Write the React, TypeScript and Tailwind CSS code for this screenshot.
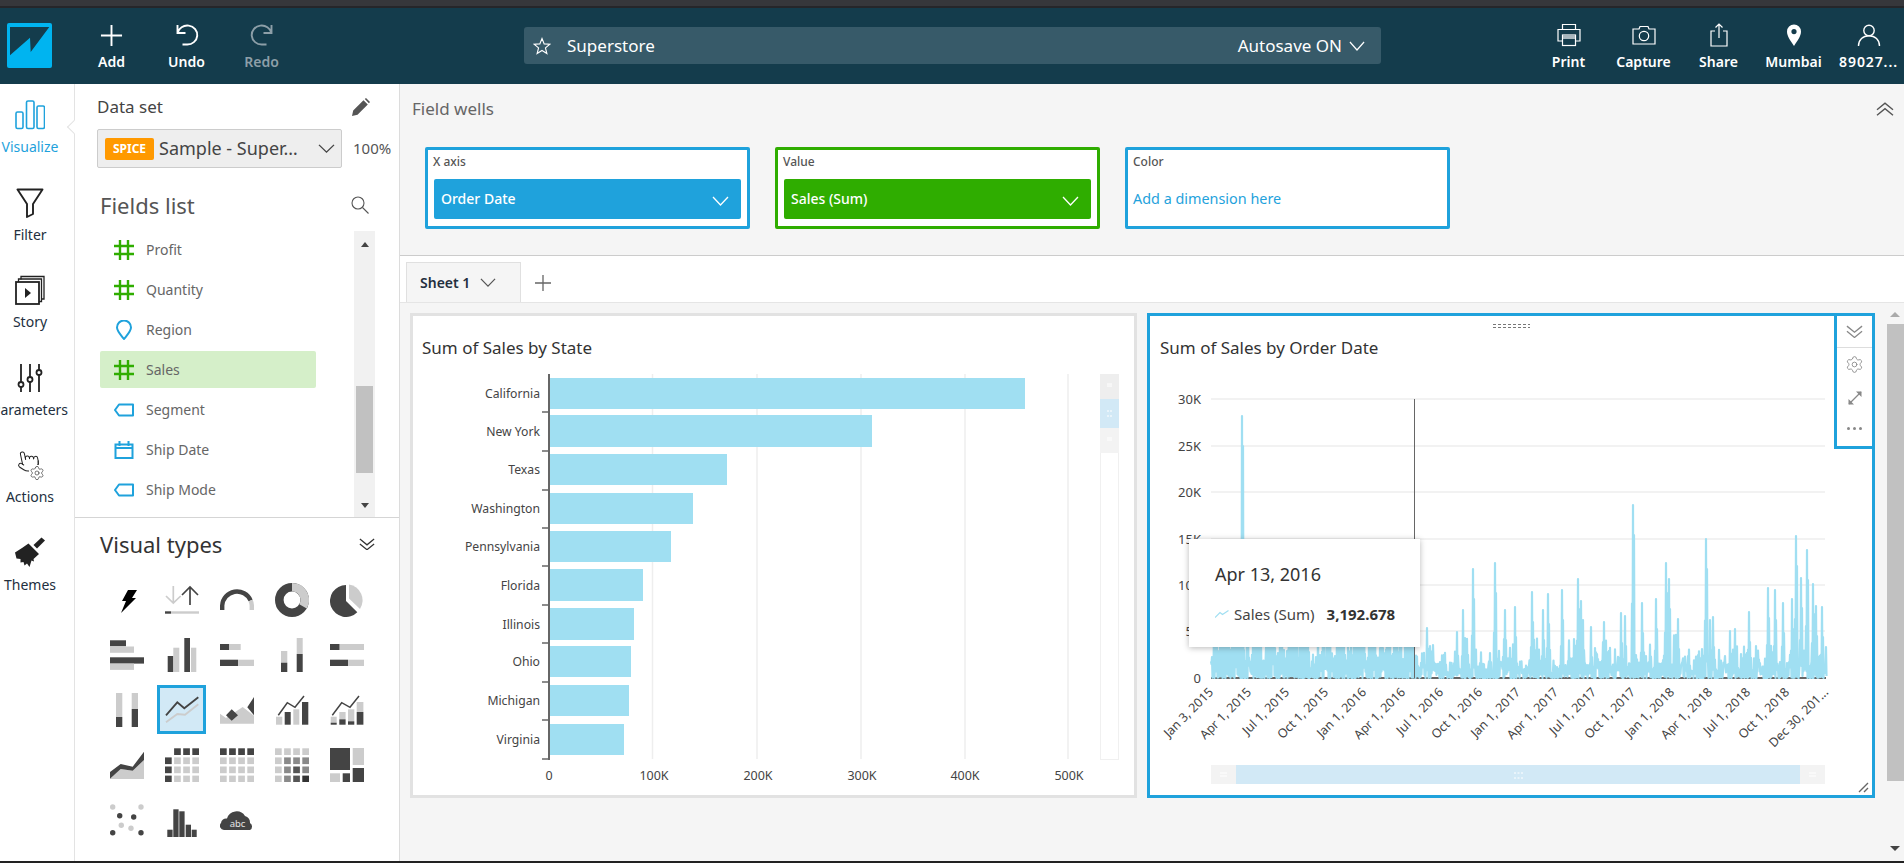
import React from "react";
import { Pointer, Settings } from "lucide-react";

const D = "#444444";
const L = "#cccccc";
const BLUE = "#1fa2dc";

const Wrap = ({ children }: { children: React.ReactNode }) => (
  <svg width="34" height="34" viewBox="0 0 34 34">{children}</svg>
);
const R = (x: number, y: number, w: number, h: number, f: string) => <rect x={x} y={y} width={w} height={h} fill={f} />;

const gridCells = (fn: (r: number, c: number) => string | null) => {
  const out: React.ReactNode[] = [];
  for (let r = 0; r < 4; r++)
    for (let c = 0; c < 4; c++) {
      const f = fn(r, c);
      if (f) out.push(<rect key={r + "-" + c} x={c * 9.1} y={r * 9.1 + 0.3} width="6.7" height="6.7" fill={f} />);
    }
  return out;
};

const heat = [
  [L, L, L, L],
  [L, "#8a8a8a", "#8a8a8a", "#8a8a8a"],
  [L, "#8a8a8a", "#555555", "#8a8a8a"],
  [L, "#8a8a8a", "#555555", "#333333"],
];

const visualIcons: React.ReactNode[] = [
  <Wrap><path d="M18 7L27 7L22 15L26 15L11 30L16 18L12 18Z" fill="#000" /></Wrap>,
  <Wrap>
    <g fill="none" strokeWidth="1.7">
      <path d="M8.3 3V20M1 13L8.3 20L15.7 13" stroke={L} />
      <path d="M25 22V4M17 12L25 4L33 12" stroke={D} />
    </g>
    {R(0, 28.3, 6, 2.4, D)}{R(6, 28.3, 28, 2.4, L)}
  </Wrap>,
  <Wrap>
    <path d="M2.2 27V22.5A14.8 14.8 0 0 1 30.6 17.5" fill="none" stroke={D} strokeWidth="4.4" />
    <path d="M30.6 17.5A14.8 14.8 0 0 1 31.8 22.5V27" fill="none" stroke={L} strokeWidth="4.4" />
  </Wrap>,
  <Wrap>
    <circle cx="17" cy="17" r="12.7" fill="none" stroke={D} strokeWidth="8.6" />
    <path d="M17 4.3A12.7 12.7 0 0 1 28 23.35" fill="none" stroke={L} strokeWidth="8.6" />
  </Wrap>,
  <Wrap>
    <path d="M16 18L16 2A16 16 0 1 0 27.3 29.3Z" fill={D} />
    <path d="M19 1.5A16 16 0 0 1 30 26L19 15.5Z" fill={L} />
  </Wrap>,
  <Wrap>{R(0, 2.3, 16, 6, D)}{R(0, 8.5, 24, 6.3, L)}{R(0, 19.3, 34, 6.3, D)}{R(0, 25.6, 24, 6.3, L)}</Wrap>,
  <Wrap>{R(2.7, 18, 5.7, 16, D)}{R(8.3, 9.7, 6, 24.3, L)}{R(19.3, 0, 5.7, 34, D)}{R(26, 9.7, 5.3, 24.3, L)}</Wrap>,
  <Wrap>{R(0, 6, 9.3, 6, D)}{R(9.3, 6, 11.4, 6, L)}{R(0, 21.7, 18, 6.3, D)}{R(18, 21.7, 16, 6.3, L)}</Wrap>,
  <Wrap>{R(6, 13, 6.3, 11.7, L)}{R(6, 24.7, 6.3, 9.3, D)}{R(21.7, 0, 6, 16, L)}{R(21.7, 16, 6, 18, D)}</Wrap>,
  <Wrap>{R(0, 6, 9.7, 6, D)}{R(9.7, 6, 24.3, 6, L)}{R(0, 21.7, 18, 6.3, D)}{R(18, 21.7, 16, 6.3, L)}</Wrap>,
  <Wrap>{R(6, 0, 6.3, 24, L)}{R(6, 24, 6.3, 10, D)}{R(21.7, 0, 6.3, 16, L)}{R(21.7, 16, 6.3, 18, D)}</Wrap>,
  <Wrap>
    <polyline points="1,29.3 12.3,21 20,21.7 33.3,11.3" fill="none" stroke={L} strokeWidth="1.8" />
    <polyline points="1,22.3 12.3,9.3 19.3,15.3 33.3,4.3" fill="none" stroke={D} strokeWidth="1.8" />
  </Wrap>,
  <Wrap>
    <path d="M0 20.7L6 25L22.7 14L34 22.7V30.7H0Z" fill={L} />
    <path d="M11.7 16.3L18 22.3L11.7 27.7L6 22.3ZM34 4V22.3L27.3 14.3Z" fill={D} />
  </Wrap>,
  <Wrap>
    {R(1, 23.7, 6.3, 8, L)}{R(9.7, 19, 6, 12.7, D)}{R(18.3, 16.3, 6, 15.4, L)}{R(27, 9, 6.3, 22.7, D)}
    <polyline points="3.3,22.3 12.3,9.7 20,14.3 29,3" fill="none" stroke={D} strokeWidth="1.5" />
  </Wrap>,
  <Wrap>
    {R(0.7, 23.7, 6, 6, L)}{R(0.7, 29.7, 6, 2, D)}{R(9.3, 19, 6.3, 7.3, L)}{R(9.3, 26.3, 6.3, 5.4, D)}
    {R(18, 16.3, 6.3, 12, L)}{R(18, 28.3, 6.3, 3.4, D)}{R(26.7, 9, 6.7, 10, L)}{R(26.7, 19, 6.7, 12.7, D)}
    <polyline points="2.3,22.3 11.7,9.7 20,14.3 29,3" fill="none" stroke={D} strokeWidth="1.5" />
  </Wrap>,
  <Wrap>
    <path d="M0 30.7L10.7 21L22.7 22.7L34 12V31H0Z" fill={L} />
    <path d="M0 24L10.7 16L22.7 18.7L34 3.7V12L22.7 22.7L10.7 21L0 30.7Z" fill={D} />
  </Wrap>,
  <Wrap>{gridCells((r, c) => (r === 0 ? (c === 0 ? null : D) : c === 0 ? D : L))}</Wrap>,
  <Wrap>{gridCells((r) => (r === 0 ? D : L))}</Wrap>,
  <Wrap>{gridCells((r, c) => heat[r][c])}</Wrap>,
  <Wrap>{R(0, 0, 20, 22, D)}{R(22.7, 0, 11.3, 17, L)}{R(22.7, 20, 11.3, 14, D)}{R(0, 25.3, 10, 8.7, L)}{R(12.7, 25.3, 7.3, 8.7, D)}</Wrap>,
  <Wrap>
    {[[2.7, 4], [31, 4], [11.3, 22.3], [21, 25.3]].map(([x, y]) => <circle key={x} cx={x} cy={y} r="2.7" fill={L} />)}
    {[[9.7, 12.7], [23.7, 14], [2.7, 29.7], [31, 29.7]].map(([x, y]) => <circle key={x + y} cx={x} cy={y} r="2.7" fill={D} />)}
  </Wrap>,
  <Wrap>{R(2.3, 26.7, 5.3, 7.3, D)}{R(8.3, 6.3, 5.3, 27.7, D)}{R(14.3, 8.3, 5.3, 25.7, D)}{R(20.7, 21.7, 5.3, 12.3, D)}{R(26.7, 26.7, 5, 7.3, D)}</Wrap>,
  <Wrap>
    <path d="M4 27A4.2 4.2 0 0 1 1 20A5 5 0 0 1 7 15.5A10 10 0 0 1 25 13A7 7 0 0 1 30 20A4 4 0 0 1 30 27Z" fill={D} />
    <text x="17.5" y="24" textAnchor="middle" fontSize="9.5" fill="#e5e5e5">abc</text>
  </Wrap>,
];

const Hash = () => (
  <svg width="20" height="20" viewBox="0 0 20 20" fill="none" stroke="#2fad00" strokeWidth="2.4">
    <path d="M6 0V20M14 0V20M0 6H20M0 14H20" />
  </svg>
);
const Tag = () => (
  <svg width="20" height="14" viewBox="0 0 20 14" fill="none" stroke={BLUE} strokeWidth="2">
    <path d="M1 7L5 1.5H19V12.5H5Z" strokeLinejoin="round" />
  </svg>
);
const PinOutline = () => (
  <svg width="18" height="20" viewBox="0 0 18 20" fill="none" stroke={BLUE} strokeWidth="2">
    <path d="M9 19C5 14 2 11 2 7.5A7 7 0 0 1 16 7.5C16 11 13 14 9 19Z" />
  </svg>
);
const Cal = () => (
  <svg width="20" height="20" viewBox="0 0 20 20" fill="none" stroke={BLUE} strokeWidth="2">
    <path d="M1.5 4.5H18.5V18H1.5ZM1.5 8H18.5" />
    <path d="M5.5 1V6M14.5 1V6" />
  </svg>
);

const fields: [string, React.ReactNode, boolean?][] = [
  ["Profit", <Hash />],
  ["Quantity", <Hash />],
  ["Region", <PinOutline />],
  ["Sales", <Hash />, true],
  ["Segment", <Tag />],
  ["Ship Date", <Cal />],
  ["Ship Mode", <Tag />],
];

const NavItem = ({ icon, label, dim, textCls }: { icon: React.ReactNode; label: string; dim?: boolean; textCls?: string }) => (
  <div className="flex h-full w-[75px] shrink-0 flex-col items-center pt-[14px]">
    <div className="flex h-[26px] items-center justify-center">{icon}</div>
    <div className={"mt-[4px] text-[14px] leading-[20px] font-semibold whitespace-nowrap " + (dim ? "text-[#8d9fa8] " : "text-white ") + (textCls ?? "")}>{label}</div>
  </div>
);

const RailItem = ({ icon, label, active }: { icon: React.ReactNode; label: string; active?: boolean }) => (
  <div className="flex h-[87.6px] w-[60px] flex-col items-center pt-[15px]">
    <div className="flex h-[32px] items-center justify-center">{icon}</div>
    <div className={"mt-[6px] text-[14px] leading-[20px] whitespace-nowrap " + (active ? "text-[#1fa2dc]" : "text-[#232f3e]")}>{label}</div>
  </div>
);

const Chevron = ({ color = "#fff", w = 17, h = 10, sw = 1.3 }: { color?: string; w?: number; h?: number; sw?: number }) => (
  <svg width={w} height={h} viewBox="0 0 17 10" fill="none" stroke={color} strokeWidth={sw} preserveAspectRatio="none">
    <path d="M1 1L8.5 9L16 1" />
  </svg>
);

const DoubleChevron = ({ up, size = 18, color = "#555" }: { up?: boolean; size?: number; color?: string }) => (
  <svg width={size} height={size * 0.8} viewBox="0 0 18 14" fill="none" stroke={color} strokeWidth="1.4">
    {up ? <path d="M1 7.5L9 1L17 7.5M1 13L9 6.5L17 13" /> : <path d="M1 1L9 7.5L17 1M1 6.5L9 13L17 6.5" />}
  </svg>
);

const Well = ({ label, color, value, pill }: { label: string; color: string; value: string; pill: string | null }) => (
  <div className="h-[82px] w-[325px] rounded-[2px] border-[3px] bg-white" style={{ borderColor: color }}>
    <div className="pl-[5px] pt-[4px] text-[12px] leading-[16px] font-medium text-[#555]">{label}</div>
    {pill ? (
      <div className="mx-[6px] mt-[9px] flex h-[40px] items-center justify-between rounded-[2px] pb-[1px] pl-[7px] pr-[12px]" style={{ backgroundColor: pill }}>
        <span className="text-[14px] font-medium text-white">{value}</span>
        <span className="mt-[5px]"><Chevron /></span>
      </div>
    ) : (
      <div className="mt-[9px] flex h-[40px] items-center pb-[1px] pl-[5px] text-[14.4px] text-[#1fa2dc]">{value}</div>
    )}
  </div>
);

const states: [string, number, number, number][] = [
  ["California", 378, 409, 1025],
  ["New York", 415, 447, 872],
  ["Texas", 454, 485, 727],
  ["Washington", 493, 524, 693],
  ["Pennsylvania", 531, 562, 671],
  ["Florida", 569, 601, 643],
  ["Illinois", 608, 640, 634],
  ["Ohio", 646, 677, 631],
  ["Michigan", 685, 716, 629],
  ["Virginia", 724, 755, 624],
];

const BarChart = () => (
  <svg width="721" height="435" viewBox="413 360 721 435" className="block">
    {[652.5, 757, 861, 965, 1068].map((x) => (
      <line key={x} x1={x} x2={x} y1="374" y2="759" stroke="#eeeeee" strokeWidth="1.5" />
    ))}
    {states.map(([n, a, b, r]) => (
      <g key={n}>
        <rect x="550" y={a} width={r - 550} height={b - a} fill="#a0dff2" />
        <text x="540" y={(a + b) / 2 + 4.5} textAnchor="end" fontSize="12.2" fill="#444">{n}</text>
      </g>
    ))}
    <line x1="549" x2="549" y1="374" y2="760" stroke="#666" strokeWidth="2" />
    {[412, 451, 490, 528, 566, 605, 643, 682, 720, 759].map((y) => (
      <line key={y} x1="542" x2="549" y1={y} y2={y} stroke="#666" strokeWidth="1.5" />
    ))}
    {[["0", 549], ["100K", 654], ["200K", 758], ["300K", 862], ["400K", 965], ["500K", 1069]].map(([t, x]) => (
      <text key={t} x={x} y="780" textAnchor="middle" fontSize="12.5" fill="#444">{t}</text>
    ))}
    <rect x="1100.5" y="374.5" width="18" height="385" fill="#fff" stroke="#f0f0f0" />
    <rect x="1100" y="374" width="19" height="25" fill="#eeeeee" />
    <rect x="1100" y="399" width="19" height="29" fill="#d2e9f6" />
    <rect x="1100" y="428" width="19" height="25" fill="#f3f3f3" />
    <path d="M1107 384H1112M1107 386H1112M1107 438H1112M1107 440H1112" stroke="#fff" />
    <path d="M1107 411H1109M1110 411H1112M1107 416H1109M1110 416H1112" stroke="#fff" />
  </svg>
);

const peaks: [number, number][] = [
  [1242, 416], [1473, 569], [1495, 563], [1463, 610], [1505, 610], [1515, 607], [1532, 592], [1427, 628], [1457, 632],
  [1633, 505], [1548, 594], [1543, 610], [1562, 590], [1578, 579], [1581, 601], [1583, 620], [1591, 627], [1604, 622],
  [1621, 613], [1625, 616], [1642, 603], [1656, 599], [1666, 563], [1669, 579], [1678, 619], [1706, 539], [1710, 620],
  [1713, 617], [1730, 631], [1735, 629], [1749, 612], [1768, 588], [1775, 590], [1783, 603], [1792, 599], [1796, 536],
  [1801, 578], [1807, 550], [1813, 584], [1816, 606], [1822, 607],
];

const buildSeries = () => {
  let seed = 12345;
  const rnd = () => {
    seed = (seed * 1103515 + 12345) % 2147483648;
    return seed / 2147483648;
  };
  const top: Record<number, number> = {};
  for (let x = 1211; x <= 1826; x++) {
    const env = 0.35 + 0.65 * Math.abs(Math.sin(x / 11) * Math.sin(x / 3.7 + 1));
    const left = x < 1420 ? 2.2 : 1;
    const h = (10 + Math.pow(rnd(), 1.6) * 40) * env * left;
    top[x] = 678 - h;
  }
  peaks.forEach(([x, y]) => {
    top[x] = y;
    if (x + 1 <= 1826) top[x + 1] = Math.min(top[x + 1], y + 30);
    if (x - 1 >= 1211) top[x - 1] = Math.min(top[x - 1], (y + 678) / 2 + 12);
  });
  const pts: string[] = [];
  for (let x = 1211; x <= 1826; x++) {
    pts.push(x + "," + top[x].toFixed(1));
    const low = 678 - Math.pow(rnd(), 3.5) * 18;
    pts.push(x + 0.5 + "," + low.toFixed(1));
  }
  return pts.join(" ");
};
const series = buildSeries();

const dateLabels: [string, number][] = [
  ["Jan 3, 2015", 1214], ["Apr 1, 2015", 1252], ["Jul 1, 2015", 1290], ["Oct 1, 2015", 1329], ["Jan 1, 2016", 1367],
  ["Apr 1, 2016", 1406], ["Jul 1, 2016", 1444], ["Oct 1, 2016", 1483], ["Jan 1, 2017", 1521], ["Apr 1, 2017", 1559],
  ["Jul 1, 2017", 1597], ["Oct 1, 2017", 1636], ["Jan 1, 2018", 1675], ["Apr 1, 2018", 1713], ["Jul 1, 2018", 1751],
  ["Oct 1, 2018", 1790], ["Dec 30, 201...", 1829],
];

const LineChart = () => (
  <svg width="722" height="435" viewBox="1150 360 722 435" className="block">
    {[399, 446, 492, 539, 585, 631].map((y) => (
      <line key={y} x1="1211" x2="1825" y1={y} y2={y} stroke="#eeeeee" strokeWidth="1.5" />
    ))}
    {[["30K", 399], ["25K", 446], ["20K", 492], ["15K", 539], ["10K", 585], ["5K", 631], ["0", 678]].map(([t, y]) => (
      <text key={t} x="1201" y={Number(y) + 4.5} textAnchor="end" fontSize="13" fill="#444">{t}</text>
    ))}
    <line x1="1211" x2="1826" y1="678" y2="678" stroke="#666" strokeWidth="2" />
    <polyline points={series} fill="none" stroke="#a0dff2" strokeWidth="2.2" strokeLinejoin="round" />
    <line x1="1414.5" x2="1414.5" y1="399" y2="678" stroke="#666" strokeWidth="1" />
    {dateLabels.map(([t, x]) => (
      <text key={t} transform={`translate(${x} 693) rotate(-45)`} textAnchor="end" fontSize="12.5" fill="#444">{t}</text>
    ))}
    <rect x="1211" y="765" width="25" height="19" fill="#f3f3f3" />
    <rect x="1236" y="765" width="564" height="19" fill="#d2e9f6" />
    <rect x="1800" y="765" width="25" height="19" fill="#f3f3f3" />
    <path d="M1220 773H1227M1220 776H1227M1809 773H1816M1809 776H1816" stroke="#fff" />
    <path d="M1514 773H1523M1514 778H1523" stroke="#fff" strokeDasharray="2 1.5" />
    <path d="M1859 792L1868 783M1864 792L1868 788" stroke="#666" strokeWidth="1.4" />
  </svg>
);

export default function App() {
  return (
    <div className="relative flex h-[863px] w-[1904px] flex-col overflow-hidden bg-white font-['Noto_Sans',sans-serif]">
      <div className="h-[6px] bg-[#36373b]" />
      <div className="h-[2px] bg-[#25262a]" />
      {/* Top navigation */}
      <div className="flex h-[76px] items-stretch bg-[#143c4c]">
        <div className="flex w-[74px] shrink-0 pl-[7px] pt-[15px]">
          <svg width="45" height="45" viewBox="0 0 45 45">
            <rect width="45" height="45" rx="2" fill="#00b4f0" />
            <path d="M3 4H42.3L23.7 29L23 14.7L3 32.3Z" fill="#143c4c" />
          </svg>
        </div>
        <NavItem label="Add" icon={<svg width="23" height="23" viewBox="0 0 24 24" stroke="#fff" strokeWidth="2"><path d="M12 1V23M1 12H23" /></svg>} />
        <NavItem label="Undo" icon={<svg width="24" height="22" viewBox="0 0 24 22" fill="none" stroke="#fff" strokeWidth="1.9"><path d="M2.5 1V9H10.5M2.5 9A10 9.5 0 1 1 12 20.5H7.5" /></svg>} />
        <NavItem dim label="Redo" icon={<svg width="24" height="22" viewBox="0 0 24 22" fill="none" stroke="#8d9fa8" strokeWidth="1.9"><path d="M21.5 1V9H13.5M21.5 9A10 9.5 0 1 0 12 20.5H16.5" /></svg>} />
        <div className="ml-[225px] mt-[19px] flex h-[37px] w-[857px] items-center rounded-[3px] bg-[#375a69] pl-[9px] pr-[16px]">
          <svg width="18" height="18" viewBox="0 0 24 24" fill="none" stroke="#fff" strokeWidth="1.5"><path d="M12 2L14.9 9.2L22.5 9.6L16.6 14.5L18.5 22L12 17.9L5.5 22L7.4 14.5L1.5 9.6L9.1 9.2Z" /></svg>
          <span className="ml-[16px] text-[17px] text-white">Superstore</span>
          <span className="ml-auto text-[17px] text-white">Autosave ON</span>
          <span className="ml-[7px]"><Chevron w={16} h={10} /></span>
        </div>
        <div className="ml-auto -mr-[2px] flex">
          <NavItem label="Print" icon={<svg width="24" height="24" viewBox="0 0 24 24" fill="none" stroke="#fff" strokeWidth="1.2"><path d="M5.5 6.5V1.5H18.5V6.5M5.5 18H1V6.5H23V18H18.5" /><rect x="5.5" y="12" width="13" height="10.5" /><rect x="6" y="12.5" width="12" height="3.5" fill="#a9b8bf" stroke="none" /></svg>} />
          <NavItem label="Capture" icon={<svg width="24" height="20" viewBox="0 0 24 20" fill="none" stroke="#fff" strokeWidth="1.2"><path d="M1 4H7L8 1.5H16L17 4H23V19H1Z" /><circle cx="12" cy="11" r="4.7" /></svg>} />
          <NavItem label="Share" icon={<svg width="20" height="24" viewBox="0 0 20 24" fill="none" stroke="#fff" strokeWidth="1.2"><path d="M6 8H2V23H18V8H14M10 1V15M6.5 4.5L10 1L13.5 4.5" /></svg>} />
          <NavItem label="Mumbai" icon={<svg width="16" height="22" viewBox="0 0 16 22"><path fillRule="evenodd" d="M8 22C4 16 1 12 1 7.5A7 7 0 0 1 15 7.5C15 12 12 16 8 22ZM8 5A2.6 2.6 0 1 0 8 10.2A2.6 2.6 0 1 0 8 5Z" fill="#fff" /></svg>} />
          <NavItem label="89027..." textCls="tracking-[0.9px]" icon={<svg width="24" height="24" viewBox="0 0 24 24" fill="none" stroke="#fff" strokeWidth="1.4"><circle cx="12" cy="7.5" r="5.2" /><path d="M1.5 23C1.5 16.5 6 12.7 12 12.7C18 12.7 22.5 16.5 22.5 23" /></svg>} />
        </div>
      </div>

      {/* Body */}
      <div className="flex h-[777px]">
        {/* Rail */}
        <div className="relative w-[75px] shrink-0 border-r border-[#e3e3e3]">
          <div className="flex flex-col">
            <RailItem active label="Visualize" icon={
              <svg width="30" height="30" viewBox="0 0 30 30" fill="none" stroke={BLUE} strokeWidth="1.6">
                <rect x="1" y="12" width="7" height="16.5" rx="1.5" /><rect x="11.5" y="1" width="7.5" height="27.5" rx="1.5" /><rect x="22" y="6" width="7.5" height="22.5" rx="1.5" />
              </svg>} />
            <RailItem label="Filter" icon={
              <svg width="28" height="30" viewBox="0 0 28 30" fill="none" stroke="#222" strokeWidth="1.9">
                <path d="M1.5 1.5H26.5L17 16V26L11 29V16Z" strokeLinejoin="round" />
              </svg>} />
            <RailItem label="Story" icon={
              <svg width="30" height="30" viewBox="0 0 30 30" fill="none" stroke="#222" strokeWidth="1.3">
                <path d="M6 4.5V1.5H29V24H26" /><path d="M3.5 7V4H26.5V26.5H24" /><rect x="1" y="7" width="23" height="22" strokeWidth="1.8" /><path d="M10 13L16 18L10 23Z" fill="#222" stroke="none" />
              </svg>} />
            <RailItem label="Parameters" icon={
              <svg width="26" height="28" viewBox="0 0 26 28" fill="none" stroke="#222" strokeWidth="1.8">
                <path d="M4 0V18M4 23V28M13 0V13M13 18V28M22 0V6M22 11V28" /><circle cx="4" cy="20.5" r="2.5" /><circle cx="13" cy="15.5" r="2.5" /><circle cx="22" cy="8.5" r="2.5" />
              </svg>} />
            <RailItem label="Actions" icon={
              <div className="relative h-[30px] w-[30px]">
                <Pointer size={24} strokeWidth={1} color="#222" className="absolute left-[1px] -top-[1px] -rotate-12" />
                <Settings size={16} strokeWidth={1} color="#333" className="absolute left-[14px] top-[15px] bg-white" />
              </div>} />
            <RailItem label="Themes" icon={
              <svg width="32" height="32" viewBox="0 0 32 32" fill="#222">
                <path d="M31 3.5L27.5 0.5L19.5 8L23 11.5Z" />
                <path d="M14.5 6.5L25 17L19.5 22L20 24.5L17.5 23.5L15.5 30L13 26.5L10.5 28.5L9.5 25L6.5 25.5L6.5 22L2.5 21.5L1 15.5L8 11Z" />
              </svg>} />
          </div>
        </div>
        <div className="absolute left-[69px] top-[122px] h-[10px] w-[10px] rotate-45 border-b border-l border-[#e3e3e3] bg-white" />

        {/* Data panel */}
        <div className="flex w-[325px] shrink-0 flex-col border-r border-[#dcdcdc] bg-white pl-[22px]">
          <div className="flex h-[34px] items-end pr-[29px]">
            <div className="flex h-[22px] w-full items-center justify-between">
              <span className="text-[17px] text-[#444]">Data set</span>
              <svg width="18" height="18" viewBox="0 0 18 18" fill="#555"><path d="M0 18L1.2 12.5L11.5 2.2L15.8 6.5L5.5 16.8ZM12.8 1L14 0L18 4L16.9 5.2Z" /></svg>
            </div>
          </div>
          <div className="mt-[11px] flex items-center">
            <div className="flex h-[39px] w-[245px] items-center rounded-[2px] border border-[#cccccc] bg-[#eeeeee] pl-[7px]">
              <span className="flex h-[22px] w-[49px] items-center justify-center rounded-[2px] bg-[#ff9900] text-[12px] font-bold text-white">SPICE</span>
              <span className="ml-[5px] text-[18px] text-[#444] whitespace-nowrap">Sample - Super…</span>
              <span className="ml-auto mr-[6px]"><Chevron color="#444" w={17} h={9} /></span>
            </div>
            <span className="ml-[11px] text-[15px] text-[#555]">100%</span>
          </div>
          <div className="mt-[22px] flex h-[30px] items-center justify-between pl-[3px] pr-[30px]">
            <span className="text-[22px] leading-[30px] text-[#555]">Fields list</span>
            <svg width="18" height="18" viewBox="0 0 18 18" fill="none" stroke="#555" strokeWidth="1.1"><circle cx="7" cy="7" r="6" /><path d="M11.5 11.5L17.5 17.5" /></svg>
          </div>
          <div className="mt-[11px] flex h-[286px] pl-[3px]">
            <div className="w-[216px]">
              {fields.map(([n, ic, sel]) => (
                <div key={n} className={"mb-[3px] flex h-[37px] items-center rounded-[2px] " + (sel ? "bg-[#d5efc9]" : "")}>
                  <div className="flex w-[48px] justify-center">{ic}</div>
                  <span className="-ml-[2px] text-[14px] text-[#666]">{n}</span>
                </div>
              ))}
            </div>
            <div className="ml-[38px] flex w-[21px] flex-col items-center bg-[#f1f1f1]">
              <div className="mt-[11px] h-0 w-0 border-x-[4.5px] border-b-[5px] border-x-transparent border-b-[#444]" />
              <div className="mt-[139px] h-[87px] w-[17px] bg-[#c1c1c1]" />
              <div className="mt-[30px] h-0 w-0 border-x-[4.5px] border-t-[5px] border-x-transparent border-t-[#444]" />
            </div>
          </div>
          <div className="-ml-[22px] flex-1 border-t border-[#d5d5d5] pl-[25px]">
            <div className="mt-[11px] flex h-[30px] items-center justify-between pr-[24px]">
              <span className="text-[22px] leading-[30px] text-[#333]">Visual types</span>
              <DoubleChevron size={16} color="#333" />
            </div>
            <div className="-ml-[1px] mt-[13px] grid w-[275px] grid-cols-5">
              {visualIcons.map((ic, i) => (
                <div key={i} className="flex h-[55px] w-[55px] items-center justify-center">
                  {i === 11 ? (
                    <div className="flex h-[49px] w-[49px] items-center justify-center border-[3px] border-[#1fa2dc] bg-[#d2e9f6]">{ic}</div>
                  ) : ic}
                </div>
              ))}
            </div>
          </div>
        </div>

        {/* Main */}
        <div className="flex min-w-0 flex-1 flex-col bg-[#f5f5f5]">
          <div className="h-[172px] shrink-0 border-b border-[#cccccc] pl-[12px]">
            <div className="mt-[14px] flex h-[22px] items-center justify-between pr-[10px]">
              <span className="text-[17px] text-[#666]">Field wells</span>
              <DoubleChevron up size={18} />
            </div>
            <div className="mt-[27px] flex gap-[25px] pl-[13px]">
              <Well label="X axis" color={BLUE} value="Order Date" pill={BLUE} />
              <Well label="Value" color="#2fad00" value="Sales (Sum)" pill="#2fad00" />
              <Well label="Color" color={BLUE} value="Add a dimension here" pill={null} />
            </div>
          </div>
          <div className="flex h-[47px] shrink-0 items-end border-b border-[#e5e5e5] bg-white pl-[6px]">
            <div className="flex h-[40px] w-[115px] items-center border border-b-0 border-[#e0e0e0] bg-[#f5f5f5] pl-[13px]">
              <span className="text-[14px] font-semibold text-[#232f3e]">Sheet 1</span>
              <span className="ml-[10px]"><Chevron color="#555" w={16} h={9} /></span>
            </div>
            <svg className="mb-[10px] ml-[13px]" width="18" height="18" viewBox="0 0 18 18" stroke="#666" strokeWidth="1.3"><path d="M9 1V17M1 9H17" /></svg>
          </div>
          <div className="flex min-h-0 flex-1">
            <div className="flex flex-1 items-start gap-[10px] pl-[10px] pt-[10px]">
              <div className="h-[485px] w-[727px] border-[3px] border-[#e2e2e2] bg-white">
                <div className="flex h-[44px] items-end pl-[9px] text-[17px] leading-[24px] text-[#333]">Sum of Sales by State</div>
                <BarChart />
              </div>
              <div className="relative h-[485px] w-[728px] border-[3px] border-[#1fa2dc] bg-white">
                <div className="flex h-[44px] items-end pl-[10px] text-[17px] leading-[24px] text-[#333]">Sum of Sales by Order Date</div>
                <LineChart />
                <div className="absolute left-[342px] top-[7px] h-[5px] w-[38px] bg-[radial-gradient(#777_1px,transparent_1.2px)] bg-[length:5px_3px]" />
                <div className="absolute left-[39px] top-[223px] h-[108px] w-[231px] bg-white pl-[26px] pt-[20px] shadow-[0_1px_6px_rgba(0,0,0,0.28)]">
                  <div className="text-[18px] leading-[30px] text-[#333]">Apr 13, 2016</div>
                  <div className="mt-[15px] flex items-center">
                    <svg width="14" height="8" viewBox="0 0 14 8" fill="none" stroke="#a0dff2" strokeWidth="1.2"><path d="M0 7.5L5 2.5L7.5 4.5L13.5 0.5" /></svg>
                    <span className="ml-[5px] text-[15px] leading-[20px] text-[#444]">Sales (Sum)</span>
                    <span className="ml-[12px] text-[15px] leading-[20px] font-bold text-[#333]">3,192.678</span>
                  </div>
                </div>
                <div className="absolute right-0 top-0 flex h-[133px] w-[38px] flex-col items-center border-b-[3px] border-l-[3px] border-[#1fa2dc] bg-white">
                  <div className="flex h-[32px] w-full shrink-0 items-center justify-center border-b border-[#dddddd]"><DoubleChevron size={17} color="#888" /></div>
                  <Settings size={19} strokeWidth={1.1} color="#888" className="mt-[7px] shrink-0" />
                  <svg className="mt-[17px] shrink-0" width="14" height="14" viewBox="0 0 14 14" fill="#888" stroke="#888"><path d="M1 13L13 1" strokeWidth="1.2" /><path d="M8 0.5H13.5V6ZM0.5 8V13.5H6Z" stroke="none" /></svg>
                  <div className="mt-[22px] flex shrink-0 gap-[3px]"><span className="h-[3px] w-[3px] rounded-full bg-[#888]" /><span className="h-[3px] w-[3px] rounded-full bg-[#888]" /><span className="h-[3px] w-[3px] rounded-full bg-[#888]" /></div>
                </div>
              </div>
            </div>
            {/* Page scrollbar */}
            <div className="flex w-[19px] shrink-0 flex-col items-center">
              <div className="mt-[9px] h-0 w-0 border-x-[5px] border-b-[5px] border-x-transparent border-b-[#aaa]" />
              <div className="ml-[2px] mt-[7px] h-[457px] w-[17px] bg-[#c1c1c1]" />
              <div className="mt-[65px] h-0 w-0 border-x-[5px] border-t-[5px] border-x-transparent border-t-[#444]" />
            </div>
          </div>
        </div>
      </div>
      <div className="h-[2px] bg-[#222]" />
    </div>
  );
}
